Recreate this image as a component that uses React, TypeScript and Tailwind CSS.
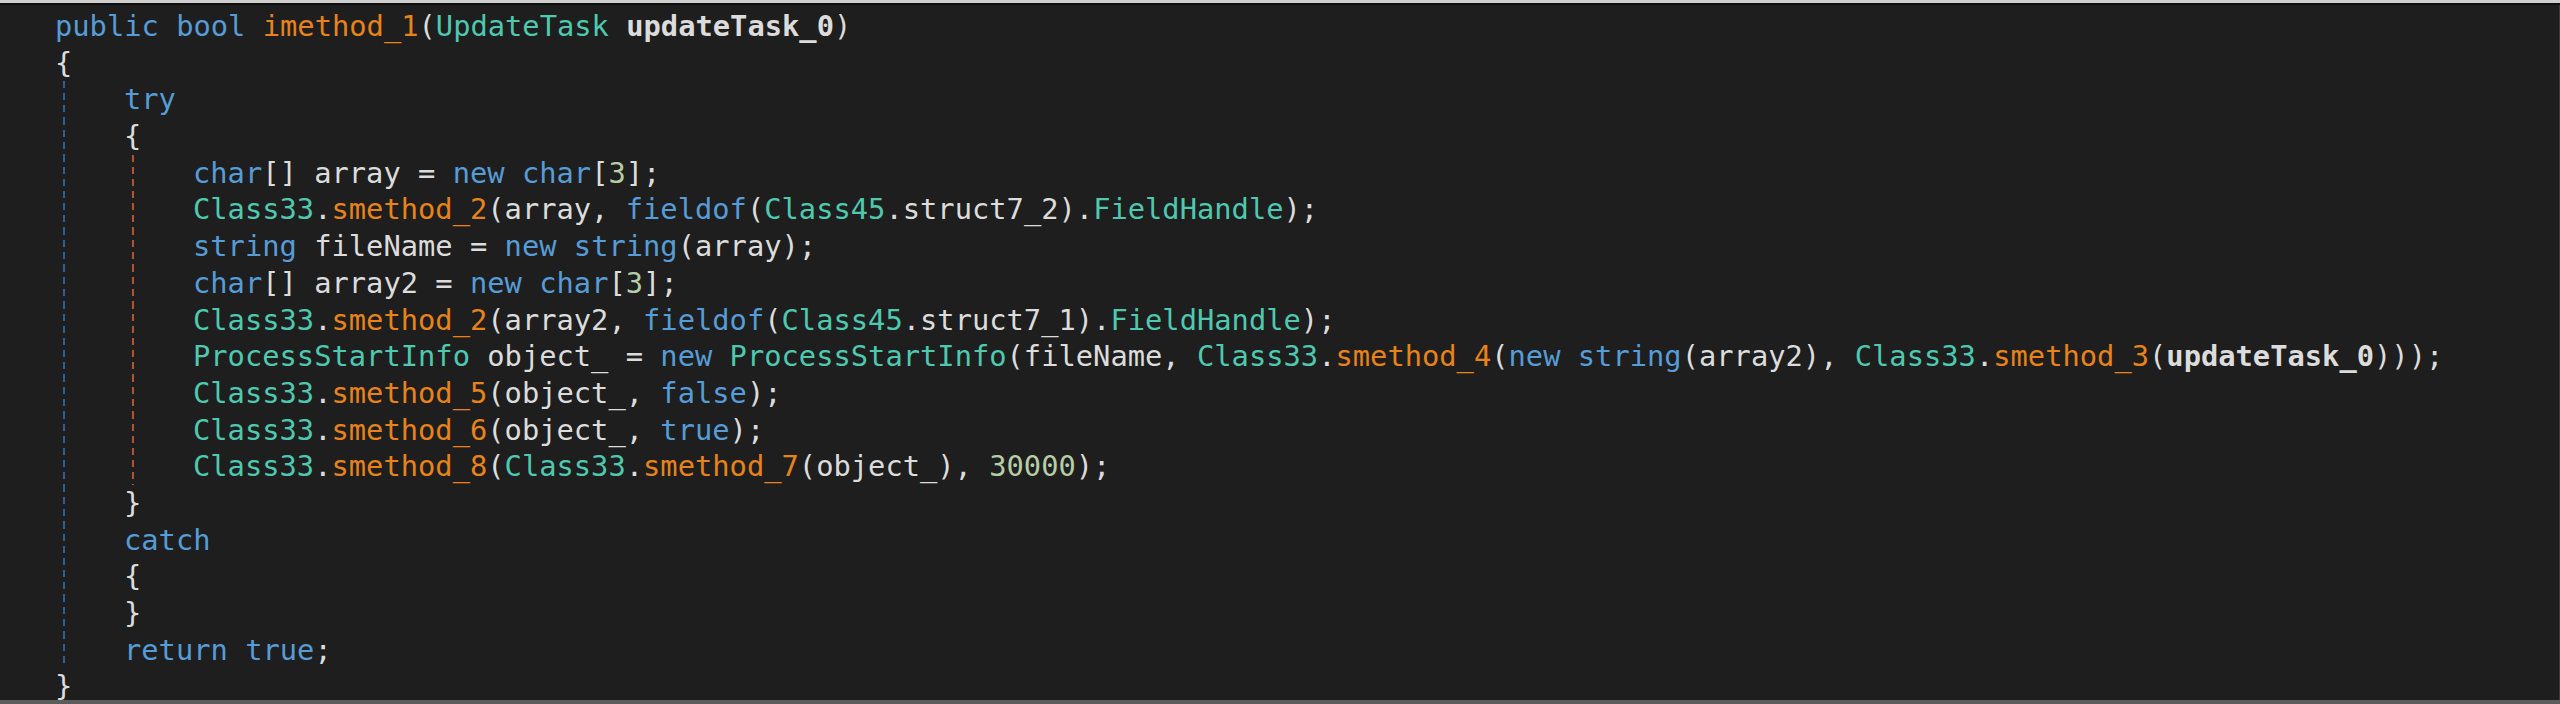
type Kind = 'kw' | 'type' | 'method' | 'num' | 'param' | 'field' | 'prop' | 'plain';
type Tok = [string, Kind];

const colors: Record<Kind, string> = {
  kw: 'text-[#569cd6]',
  type: 'text-[#4ec9b0]',
  method: 'text-[#e8831c]',
  num: 'text-[#b5cea8]',
  param: 'text-[#dcdcdc] font-bold',
  field: 'text-[#dcdcdc]',
  prop: 'text-[#4ec9b0]',
  plain: 'text-[#dcdcdc]',
};

const call = (cls: string, m: string): Tok[] => [[cls, 'type'], ['.', 'plain'], [m, 'method']];

const lines: { indent: number; toks: Tok[] }[] = [
  {
    indent: 0,
    toks: [
      ['public', 'kw'], [' ', 'plain'], ['bool', 'kw'], [' ', 'plain'], ['imethod_1', 'method'],
      ['(', 'plain'], ['UpdateTask', 'type'], [' ', 'plain'], ['updateTask_0', 'param'], [')', 'plain'],
    ],
  },
  { indent: 0, toks: [['{', 'plain']] },
  { indent: 1, toks: [['try', 'kw']] },
  { indent: 1, toks: [['{', 'plain']] },
  {
    indent: 2,
    toks: [
      ['char', 'kw'], ['[] array = ', 'plain'], ['new', 'kw'], [' ', 'plain'], ['char', 'kw'],
      ['[', 'plain'], ['3', 'num'], ['];', 'plain'],
    ],
  },
  {
    indent: 2,
    toks: [
      ...call('Class33', 'smethod_2'), ['(array, ', 'plain'], ['fieldof', 'kw'], ['(', 'plain'],
      ['Class45', 'type'], ['.', 'plain'], ['struct7_2', 'field'], [').', 'plain'], ['FieldHandle', 'prop'], [');', 'plain'],
    ],
  },
  {
    indent: 2,
    toks: [
      ['string', 'kw'], [' fileName = ', 'plain'], ['new', 'kw'], [' ', 'plain'], ['string', 'kw'], ['(array);', 'plain'],
    ],
  },
  {
    indent: 2,
    toks: [
      ['char', 'kw'], ['[] array2 = ', 'plain'], ['new', 'kw'], [' ', 'plain'], ['char', 'kw'],
      ['[', 'plain'], ['3', 'num'], ['];', 'plain'],
    ],
  },
  {
    indent: 2,
    toks: [
      ...call('Class33', 'smethod_2'), ['(array2, ', 'plain'], ['fieldof', 'kw'], ['(', 'plain'],
      ['Class45', 'type'], ['.', 'plain'], ['struct7_1', 'field'], [').', 'plain'], ['FieldHandle', 'prop'], [');', 'plain'],
    ],
  },
  {
    indent: 2,
    toks: [
      ['ProcessStartInfo', 'type'], [' object_ = ', 'plain'], ['new', 'kw'], [' ', 'plain'], ['ProcessStartInfo', 'type'],
      ['(fileName, ', 'plain'], ...call('Class33', 'smethod_4'), ['(', 'plain'], ['new', 'kw'], [' ', 'plain'],
      ['string', 'kw'], ['(array2), ', 'plain'], ...call('Class33', 'smethod_3'), ['(', 'plain'],
      ['updateTask_0', 'param'], [')));', 'plain'],
    ],
  },
  { indent: 2, toks: [...call('Class33', 'smethod_5'), ['(object_, ', 'plain'], ['false', 'kw'], [');', 'plain']] },
  { indent: 2, toks: [...call('Class33', 'smethod_6'), ['(object_, ', 'plain'], ['true', 'kw'], [');', 'plain']] },
  {
    indent: 2,
    toks: [
      ...call('Class33', 'smethod_8'), ['(', 'plain'], ...call('Class33', 'smethod_7'), ['(object_), ', 'plain'],
      ['30000', 'num'], [');', 'plain'],
    ],
  },
  { indent: 1, toks: [['}', 'plain']] },
  { indent: 1, toks: [['catch', 'kw']] },
  { indent: 1, toks: [['{', 'plain']] },
  { indent: 1, toks: [['}', 'plain']] },
  { indent: 1, toks: [['return', 'kw'], [' ', 'plain'], ['true', 'kw'], [';', 'plain']] },
  { indent: 0, toks: [['}', 'plain']] },
];

// guides only run inside the try block and the method body
function guideFor(lineIdx: number, level: number) {
  if (level === 0) return lineIdx >= 2 && lineIdx <= 17 ? 'blue' : null;
  if (level === 1) return lineIdx >= 4 && lineIdx <= 12 ? 'orange' : null;
  return null;
}

function IndentCell({ guide }: { guide: 'blue' | 'orange' | null }) {
  return (
    <span className="flex w-[69px] shrink-0 self-stretch">
      {guide === 'blue' && (
        <span className="ml-[8px] w-[2px] self-stretch bg-[repeating-linear-gradient(to_bottom,#2f5f93_0px,#2f5f93_7px,transparent_7px,transparent_12px)]" />
      )}
      {guide === 'orange' && (
        <span className="ml-[8px] w-[2px] self-stretch bg-[repeating-linear-gradient(to_bottom,#b0552f_0px,#b0552f_7px,transparent_7px,transparent_12px)]" />
      )}
    </span>
  );
}

export default function App() {
  return (
    <div className="w-[2560px] h-[704px] flex flex-col bg-[#1e1e1e] overflow-hidden">
      <div className="h-[3px] bg-[#cfcfcf] shrink-0" />
      <div className="h-[2px] bg-[#0e0e0e] shrink-0" />
      <div className="flex-1 min-h-0 border-r border-[#3a3a3a] pl-[55px] pt-[3px] overflow-hidden">
        <pre className="font-['DejaVu_Sans_Mono',monospace] text-[28.75px] leading-[36.7px]">
          {lines.map((ln, i) => (
            <div key={i} className="flex h-[36.7px] whitespace-pre">
              {Array.from({ length: ln.indent }).map((_, lv) => (
                <IndentCell key={lv} guide={guideFor(i, lv) as 'blue' | 'orange' | null} />
              ))}
              <span>
                {ln.toks.map(([t, k], j) => (
                  <span key={j} className={colors[k]}>{t}</span>
                ))}
              </span>
            </div>
          ))}
        </pre>
      </div>
      <div className="h-[4px] bg-[#5c5c5c] shrink-0" />
    </div>
  );
}
